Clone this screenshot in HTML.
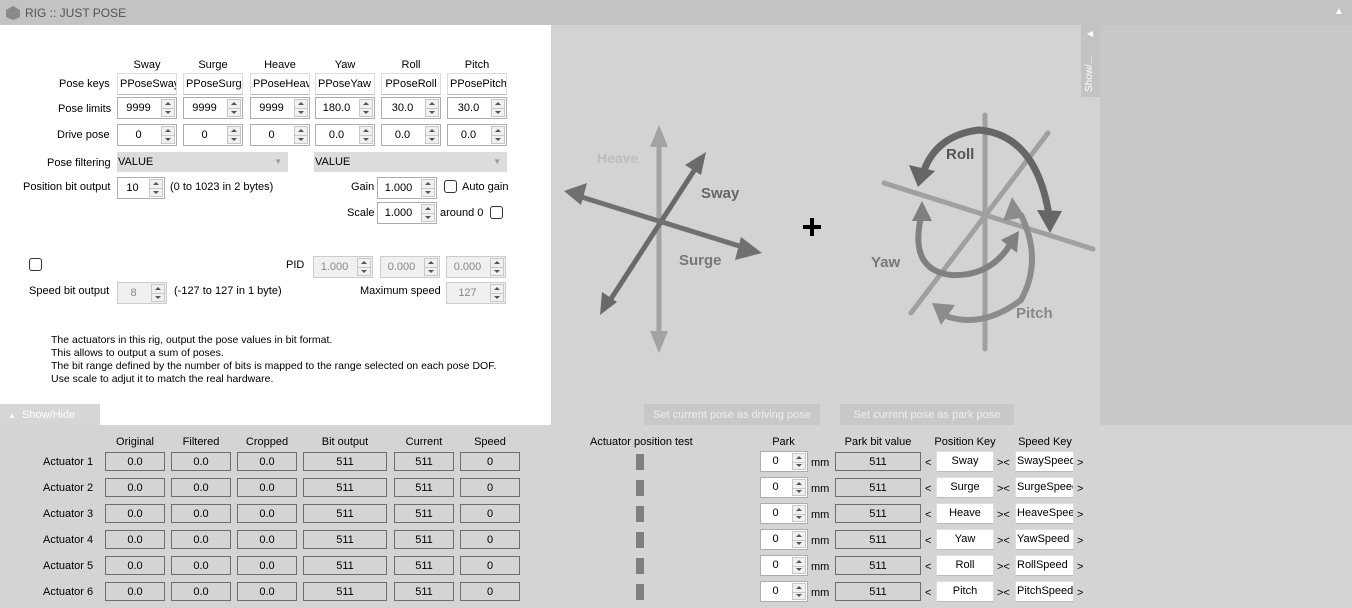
<!DOCTYPE html>
<html><head><meta charset="utf-8"><style>
*{box-sizing:border-box;margin:0;padding:0}
body{width:1352px;height:608px;overflow:hidden;background:#d4d4d4;font-family:"Liberation Sans",Arial,sans-serif;font-size:11px;color:#000;position:relative}
.a{position:absolute;white-space:nowrap}
.sp{position:absolute;height:22px;background:#fff;border:1px solid #adadad;}
.sp span{position:absolute;left:0;right:17px;top:4px;text-align:center}
.sp i{position:absolute;right:1px;top:1px;width:14px;bottom:1px;border:1px solid #c8c8c8;background:#f0f0f0}
.sp i:before{content:"";position:absolute;left:3px;top:2px;border:3px solid transparent;border-bottom:3px solid #555;border-top:0}
.sp i:after{content:"";position:absolute;left:3px;bottom:2px;border:3px solid transparent;border-top:3px solid #555;border-bottom:0}
.sp i b{position:absolute;left:0;right:0;top:50%;border-top:1px solid #c8c8c8}
.dis{background:#f0f0f0;border-color:#ccc;color:#888}
.tx{position:absolute;height:22px;background:#fff;border:1px solid #ddd;border-bottom-color:#bbb;padding:4px 2px;overflow:hidden}
.bx{position:absolute;height:19px;border:1px solid #6d6d6d;text-align:center;padding-top:3px}
.cb{position:absolute;width:13px;height:13px;border:1px solid #333;border-radius:3px;background:#fff}
.c{text-align:center}
</style></head><body>
<div class="a" style="left:0;top:0;width:1352px;height:25px;background:#c3c3c3"></div>
<svg class="a" style="left:5px;top:5px" width="16" height="16"><polygon points="8,1 15,5 15,12 8,15 1,12 1,5" fill="#8a8a8a"/></svg>
<div class="a" style="left:25px;top:6px;color:#555;font-size:12px">RIG :: JUST POSE</div>
<div class="a" style="left:1334px;top:6px;color:#fff;font-size:10px">▲</div>
<div class="a" style="left:0;top:25px;width:551px;height:400px;background:#fff"></div>
<div class="a" style="left:551px;top:25px;width:549px;height:375px;background:#d3d3d3"></div>
<div class="a" style="left:1100px;top:25px;width:252px;height:400px;background:#c8c8c8"></div>
<div class="a" style="left:1081px;top:25px;width:19px;height:72px;background:#c3c3c3"></div>
<div class="a" style="left:1087px;top:29px;color:#fff;font-size:8px">◀</div>
<div class="a" style="left:1084px;top:92px;color:#fff;font-size:10px;transform:rotate(-90deg);transform-origin:0 0">Show/...</div>

<div class="a c" style="left:117px;top:59px;width:60px">Sway</div>
<div class="a c" style="left:183px;top:59px;width:60px">Surge</div>
<div class="a c" style="left:250px;top:59px;width:60px">Heave</div>
<div class="a c" style="left:315px;top:59px;width:60px">Yaw</div>
<div class="a c" style="left:381px;top:59px;width:60px">Roll</div>
<div class="a c" style="left:447px;top:59px;width:60px">Pitch</div>
<div class="a" style="left:59px;top:78px">Pose keys</div>
<div class="a" style="left:58px;top:103px">Pose limits</div>
<div class="a" style="left:57px;top:129px">Drive pose</div>
<div class="a" style="left:47px;top:157px">Pose filtering</div>
<div class="a" style="left:23px;top:181px">Position bit output</div>

<div class="tx" style="left:117px;top:73px;width:60px">PPoseSway</div>
<div class="tx" style="left:183px;top:73px;width:60px">PPoseSurge</div>
<div class="tx" style="left:250px;top:73px;width:60px">PPoseHeave</div>
<div class="tx" style="left:315px;top:73px;width:60px">PPoseYaw</div>
<div class="tx" style="left:381px;top:73px;width:60px;text-align:center">PPoseRoll</div>
<div class="tx" style="left:447px;top:73px;width:60px">PPosePitch</div>

<div class="sp" style="left:117px;top:97px;width:60px"><span>9999</span><i><b></b></i></div>
<div class="sp" style="left:183px;top:97px;width:60px"><span>9999</span><i><b></b></i></div>
<div class="sp" style="left:250px;top:97px;width:60px"><span>9999</span><i><b></b></i></div>
<div class="sp" style="left:315px;top:97px;width:60px"><span>180.0</span><i><b></b></i></div>
<div class="sp" style="left:381px;top:97px;width:60px"><span>30.0</span><i><b></b></i></div>
<div class="sp" style="left:447px;top:97px;width:60px"><span>30.0</span><i><b></b></i></div>
<div class="sp" style="left:117px;top:124px;width:60px"><span>0</span><i><b></b></i></div>
<div class="sp" style="left:183px;top:124px;width:60px"><span>0</span><i><b></b></i></div>
<div class="sp" style="left:250px;top:124px;width:60px"><span>0</span><i><b></b></i></div>
<div class="sp" style="left:315px;top:124px;width:60px"><span>0.0</span><i><b></b></i></div>
<div class="sp" style="left:381px;top:124px;width:60px"><span>0.0</span><i><b></b></i></div>
<div class="sp" style="left:447px;top:124px;width:60px"><span>0.0</span><i><b></b></i></div>

<div class="a" style="left:117px;top:152px;width:171px;height:20px;background:#dcdcdc;padding:4px 1px">VALUE<span style="position:absolute;right:6px;top:5px;color:#999;font-size:8px">▼</span></div>
<div class="a" style="left:314px;top:152px;width:193px;height:20px;background:#dcdcdc;padding:4px 1px">VALUE<span style="position:absolute;right:6px;top:5px;color:#999;font-size:8px">▼</span></div>

<div class="sp" style="left:117px;top:177px;width:48px"><span>10</span><i><b></b></i></div>
<div class="a" style="left:170px;top:181px">(0 to 1023 in 2 bytes)</div>
<div class="a" style="left:351px;top:181px">Gain</div>
<div class="sp" style="left:377px;top:177px;width:60px"><span>1.000</span><i><b></b></i></div>
<div class="cb" style="left:444px;top:180px"></div>
<div class="a" style="left:462px;top:181px">Auto gain</div>
<div class="a" style="left:347px;top:207px">Scale</div>
<div class="sp" style="left:377px;top:202px;width:60px"><span>1.000</span><i><b></b></i></div>
<div class="a" style="left:440px;top:207px">around 0</div>
<div class="cb" style="left:490px;top:206px"></div>

<div class="cb" style="left:29px;top:258px"></div>
<div class="a" style="left:286px;top:259px">PID</div>
<div class="sp dis" style="left:313px;top:256px;width:60px"><span>1.000</span><i><b></b></i></div>
<div class="sp dis" style="left:380px;top:256px;width:60px"><span>0.000</span><i><b></b></i></div>
<div class="sp dis" style="left:446px;top:256px;width:60px"><span>0.000</span><i><b></b></i></div>
<div class="a" style="left:29px;top:285px">Speed bit output</div>
<div class="sp dis" style="left:117px;top:282px;width:50px"><span>8</span><i><b></b></i></div>
<div class="a" style="left:174px;top:285px">(-127 to 127 in 1 byte)</div>
<div class="a" style="left:360px;top:285px">Maximum speed</div>
<div class="sp dis" style="left:446px;top:282px;width:60px"><span>127</span><i><b></b></i></div>

<div class="a" style="left:51px;top:334px;line-height:13px;font-size:10.5px">The actuators in this rig, output the pose values in bit format.<br>This allows to output a sum of poses.<br>The bit range defined by the number of bits is mapped to the range selected on each pose DOF.<br>Use scale to adjut it to match the real hardware.</div>

<div class="a" style="left:0;top:404px;width:100px;height:21px;background:#d6d6d6;color:#fff;padding:5px 8px"><span style="font-size:8px">▲</span>&nbsp; Show/Hide</div>

<div class="a c" style="left:644px;top:404px;width:176px;height:21px;background:#c8c8c8;color:#eee;padding-top:5px">Set current pose as driving pose</div>
<div class="a c" style="left:840px;top:404px;width:174px;height:21px;background:#c8c8c8;color:#eee;padding-top:5px">Set current pose as park pose</div>

<svg class="a" style="left:551px;top:25px" width="549" height="375">
<g stroke-linecap="round" fill="none">
<line x1="108" y1="112" x2="108" y2="318" stroke="#a3a3a3" stroke-width="5"/>
<polygon points="108,100 99,122 117,122" fill="#a3a3a3"/>
<polygon points="108,328 99,306 117,306" fill="#a3a3a3"/>
<line x1="56" y1="280" x2="148" y2="138" stroke="#6a6a6a" stroke-width="5"/>
<polygon points="155,127 134,140 150,150" fill="#6a6a6a"/>
<polygon points="49,290 51,267 66,277" fill="#6a6a6a"/>
<line x1="24" y1="170" x2="198" y2="224" stroke="#707070" stroke-width="5"/>
<polygon points="13,166 36,158 30,180" fill="#707070"/>
<polygon points="211,228 190,212 184,235" fill="#707070"/>
<line x1="434" y1="90" x2="434" y2="324" stroke="#a0a0a0" stroke-width="5"/>
<line x1="333" y1="158" x2="542" y2="224" stroke="#a0a0a0" stroke-width="5"/>
<line x1="360" y1="288" x2="497" y2="108" stroke="#a0a0a0" stroke-width="5"/>
<path d="M372 148 Q385 110 428 105 Q485 110 498 190" stroke="#666" stroke-width="7"/>
<polygon points="367,162 358,140 384,146" fill="#666"/>
<polygon points="499,208 486,185 511,186" fill="#666"/>
<path d="M370 192 Q358 245 400 250 Q440 252 460 218" stroke="#808080" stroke-width="6"/>
<polygon points="371,176 361,196 381,196" fill="#808080"/>
<polygon points="468,206 450,215 466,228" fill="#808080"/>
<path d="M470 190 Q492 235 470 275 Q430 305 392 290" stroke="#8c8c8c" stroke-width="6"/>
<polygon points="461,172 452,196 474,192" fill="#8c8c8c"/>
<polygon points="381,278 404,280 390,300" fill="#8c8c8c"/>
</g>
<rect x="259" y="193" width="4" height="18" fill="#000"/><rect x="252" y="200" width="18" height="4" fill="#000"/>
<g font-family="Liberation Sans,Arial" font-size="15" font-weight="bold">
<text x="46" y="138" fill="#bdbdbd" font-size="14">Heave</text>
<text x="150" y="173" fill="#666">Sway</text>
<text x="128" y="240" fill="#777">Surge</text>
<text x="395" y="134" fill="#555">Roll</text>
<text x="320" y="242" fill="#777">Yaw</text>
<text x="465" y="293" fill="#888">Pitch</text>
</g>
</svg>

<div class="a c" style="left:105px;top:436px;width:60px">Original</div>
<div class="a c" style="left:171px;top:436px;width:60px">Filtered</div>
<div class="a c" style="left:237px;top:436px;width:60px">Cropped</div>
<div class="a c" style="left:303px;top:436px;width:84px">Bit output</div>
<div class="a c" style="left:394px;top:436px;width:60px">Current</div>
<div class="a c" style="left:460px;top:436px;width:60px">Speed</div>
<div class="a" style="left:590px;top:436px">Actuator position test</div>
<div class="a c" style="left:760px;top:436px;width:47px">Park</div>
<div class="a c" style="left:835px;top:436px;width:86px">Park bit value</div>
<div class="a c" style="left:934px;top:436px;width:62px">Position Key</div>
<div class="a c" style="left:1014px;top:436px;width:62px">Speed Key</div>

<div id="rows"></div>
<script>
var keys=[["Sway","SwaySpeed"],["Surge","SurgeSpeed"],["Heave","HeaveSpeed"],["Yaw","YawSpeed"],["Roll","RollSpeed"],["Pitch","PitchSpeed"]];
var h="";
for(var i=0;i<6;i++){var y=452+i*26;
h+='<div class="a" style="left:43px;top:'+(y+4)+'px">Actuator '+(i+1)+'</div>';
[[105,60,"0.0"],[171,60,"0.0"],[237,60,"0.0"],[303,84,"511"],[394,60,"511"],[460,60,"0"]].forEach(function(c){h+='<div class="bx" style="left:'+c[0]+'px;top:'+y+'px;width:'+c[1]+'px">'+c[2]+'</div>';});
h+='<div class="a" style="left:636px;top:'+(y+2)+'px;width:8px;height:16px;background:#808080"></div>';
h+='<div class="sp" style="left:760px;top:'+(y-1)+'px;width:48px;height:21px"><span style="top:3px">0</span><i><b></b></i></div>';
h+='<div class="a" style="left:811px;top:'+(y+5)+'px">mm</div>';
h+='<div class="bx" style="left:835px;top:'+y+'px;width:86px">511</div>';
h+='<div class="a" style="left:925px;top:'+(y+5)+'px">&lt;</div>';
h+='<div class="tx" style="left:936px;top:'+(y-1)+'px;width:58px;height:21px;text-align:center;padding-top:3px">'+keys[i][0]+'</div>';
h+='<div class="a" style="left:997px;top:'+(y+5)+'px">&gt;&lt;</div>';
h+='<div class="tx" style="left:1015px;top:'+(y-1)+'px;width:59px;height:21px;padding:3px 1px">'+keys[i][1]+'</div>';
h+='<div class="a" style="left:1077px;top:'+(y+5)+'px">&gt;</div>';}
document.getElementById("rows").innerHTML=h;
</script>
</body></html>
